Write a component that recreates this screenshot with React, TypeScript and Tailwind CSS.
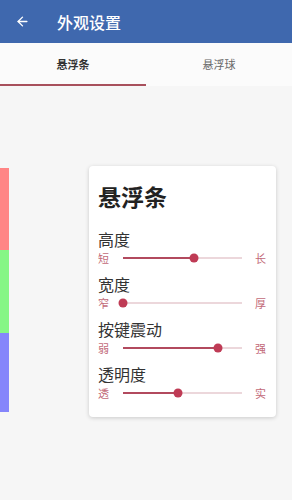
import { ArrowLeft } from "lucide-react";

interface SliderRowProps {
  left: string;
  right: string;
  value: number;
}

function SliderRow({ left, right, value }: SliderRowProps) {
  return (
    <div className="flex h-[18px] items-center">
      <span className="w-[25px] text-[11px] leading-none text-[#c26a78]">{left}</span>
      <div className="relative h-[2px] w-[119px] bg-[#ecd7db]">
        <div className="absolute left-0 top-0 h-[2px] bg-[#b24a5e]" style={{ width: `${value}%` }} />
        <div
          className="absolute top-1/2 h-[9px] w-[9px] -translate-x-1/2 -translate-y-1/2 rounded-full bg-[#bf3b55]"
          style={{ left: `${value}%` }}
        />
      </div>
      <span className="ml-[13px] text-[11px] leading-none text-[#c26a78]">{right}</span>
    </div>
  );
}

const SETTINGS = [
  { title: "高度", left: "短", right: "长", value: 60 },
  { title: "宽度", left: "窄", right: "厚", value: 0 },
  { title: "按键震动", left: "弱", right: "强", value: 80 },
  { title: "透明度", left: "透", right: "实", value: 46 },
];

export default function App() {
  return (
    <div
      className="flex h-[500px] w-[292px] flex-col overflow-hidden bg-[#f6f6f6]"
      style={{ fontFamily: '"Noto Sans CJK SC", "Noto Sans", sans-serif' }}
    >
      {/* toolbar */}
      <div className="flex h-[43px] items-center bg-[#3f68ae] shadow-[0_1px_3px_rgba(0,0,0,0.2)]">
        <ArrowLeft className="ml-[15px] h-[15px] w-[15px] text-white" strokeWidth={2.2} />
        <span className="ml-[27px] text-[16px] font-medium text-white">外观设置</span>
      </div>

      {/* tabs */}
      <div className="flex h-[43px] bg-[#fbfbfb]">
        <div className="flex w-[146px] flex-col">
          <div className="flex flex-1 items-center justify-center pt-[2px] text-[11px] font-bold text-[#333]">悬浮条</div>
          <div className="h-[2px] bg-[#a8505c]" />
        </div>
        <div className="flex flex-1 items-center justify-center text-[11px] text-[#666]">悬浮球</div>
      </div>

      {/* body */}
      <div className="flex flex-1 items-start pt-[80px]">
        <div className="mt-[2px] flex w-[9px] flex-col">
          <div className="h-[82px] bg-[#ff8585]" />
          <div className="h-[83px] bg-[#86f686]" />
          <div className="h-[79px] bg-[#8585fb]" />
        </div>

        <div className="ml-[80px] h-[251px] w-[187px] rounded-[4px] bg-white pl-[9px] pt-[14px] shadow-[0_1px_4px_rgba(0,0,0,0.18)]">
          <div className="text-[23px] font-bold leading-[32px] text-[#222]">悬浮条</div>
          <div className="mt-[17px] flex flex-col gap-[7px]">
            {SETTINGS.map((s) => (
              <div key={s.title} className="flex flex-col">
                <div className="text-[16px] leading-[20px] text-[#333]">{s.title}</div>
                <SliderRow left={s.left} right={s.right} value={s.value} />
              </div>
            ))}
          </div>
        </div>
      </div>
    </div>
  );
}
